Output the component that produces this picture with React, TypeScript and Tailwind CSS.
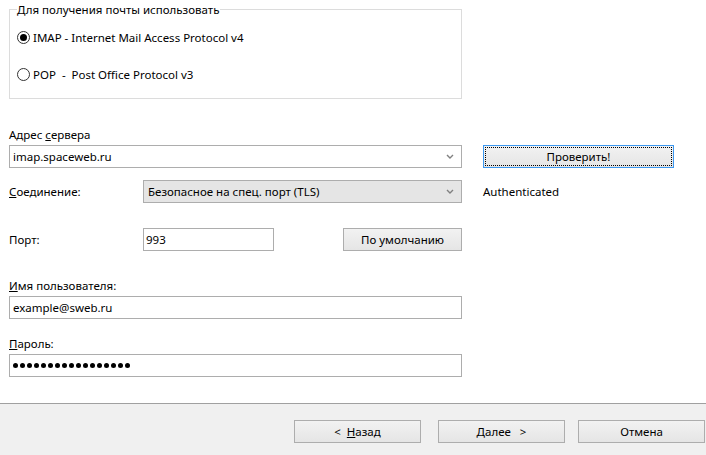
import React from "react";

const font = { fontFamily: '"Noto Sans", "Open Sans", sans-serif' };

function Chevron() {
  return (
    <svg width="8" height="5" viewBox="0 0 8 5" className="shrink-0">
      <path d="M1 1 L4 4 L7 1" fill="none" stroke="#808080" strokeWidth="1.4" />
    </svg>
  );
}

function Radio({ checked }: { checked: boolean }) {
  return (
    <span className="w-[13px] h-[13px] rounded-full border border-[#333] bg-white flex items-center justify-center shrink-0">
      {checked && <span className="w-[7px] h-[7px] rounded-full bg-black" />}
    </span>
  );
}

function Btn({ children, className = "" }: { children: React.ReactNode; className?: string }) {
  return (
    <div
      className={
        "h-[23px] border border-[#adadad] bg-gradient-to-b from-[#f2f2f2] to-[#e5e5e5] flex items-center justify-center text-black " +
        className
      }
    >
      {children}
    </div>
  );
}

export default function App() {
  return (
    <div className="w-[706px] h-[455px] bg-white flex flex-col text-[11.5px] leading-[15px] text-black overflow-hidden" style={font}>
      <div className="flex-1 pl-[9px]">
        {/* group box */}
        <div className="relative mt-[9px] w-[453px] h-[90px] border border-[#dcdcdc]">
          <span className="absolute left-[7px] top-[-8px] bg-white pr-[1px]">Для получения почты использовать</span>
          <div className="absolute left-[7px] top-[20px] flex items-center gap-[3px]">
            <Radio checked />
            <span>IMAP - Internet Mail Access Protocol v4</span>
          </div>
          <div className="absolute left-[7px] top-[57px] flex items-center gap-[3px]">
            <Radio checked={false} />
            <span className="whitespace-pre">POP  -  Post Office Protocol v3</span>
          </div>
        </div>

        <div className="mt-[28px] h-[15px]">
          Адрес <u>с</u>ервера
        </div>

        <div className="mt-[3px] flex items-center">
          <div className="w-[453px] h-[23px] border border-[#adadad] bg-white flex items-center pl-[3px] pr-[7px]">
            <span className="flex-1">imap.spaceweb.ru</span>
            <Chevron />
          </div>
          <div className="ml-[21px] w-[191px] h-[23px] border border-[#3c98f0] bg-gradient-to-b from-[#f2f2f2] to-[#e5e5e5] p-[1px]">
            <div className="w-full h-full border border-dotted border-black flex items-center justify-center">Проверить!</div>
          </div>
        </div>

        <div className="mt-[12px] flex items-center h-[23px]">
          <span className="w-[134px]">
            <u>С</u>оединение:
          </span>
          <div className="w-[319px] h-[23px] border border-[#adadad] bg-[#e5e5e5] flex items-center pl-[4px] pr-[7px]">
            <span className="flex-1">Безопасное на спец. порт (TLS)</span>
            <Chevron />
          </div>
          <span className="ml-[21px]">Authenticated</span>
        </div>

        <div className="mt-[25px] flex items-center h-[23px]">
          <span className="w-[134px]">Порт:</span>
          <div className="w-[131px] h-[23px] border border-[#adadad] bg-white flex items-center pl-[2px]">993</div>
          <Btn className="ml-[69px] w-[119px]">По умолчанию</Btn>
        </div>

        <div className="mt-[27px] h-[15px]">
          <u>И</u>мя пользователя:
        </div>
        <div className="mt-[3px] w-[453px] h-[23px] border border-[#adadad] bg-white flex items-center pl-[3px]">
          example@sweb.ru
        </div>

        <div className="mt-[17px] h-[15px]">
          <u>П</u>ароль:
        </div>
        <div className="mt-[3px] w-[453px] h-[23px] border border-[#adadad] bg-white flex items-center pl-[3px] gap-[2px]">
          {Array.from({ length: 17 }).map((_, i) => (
            <span key={i} className="w-[5px] h-[5px] rounded-full bg-black" />
          ))}
        </div>
      </div>

      <div className="h-[52px] border-t border-[#a0a0a0] bg-[#f0f0f0] flex items-start pt-[16px] pl-[294px]">
        <Btn className="w-[127px] whitespace-pre">
          {"<  "}
          <u>Н</u>азад
        </Btn>
        <Btn className="ml-[17px] w-[127px] whitespace-pre">
          <u>Д</u>
          {"алее   >"}
        </Btn>
        <Btn className="ml-[13px] w-[127px]">Отмена</Btn>
      </div>
    </div>
  );
}
